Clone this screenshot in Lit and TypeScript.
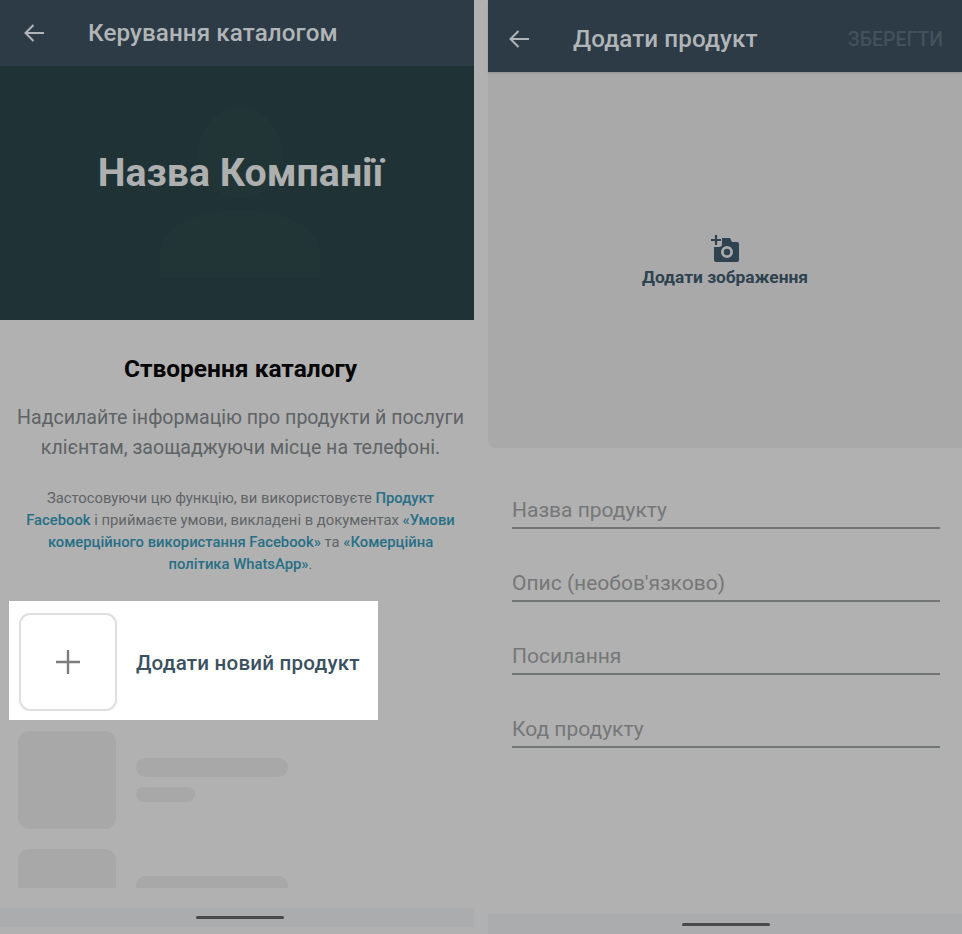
import { LitElement, html, css } from 'lit';
import { customElement } from 'lit/decorators.js';

const backArrow = html`<svg class="back" viewBox="0 0 20 18" width="20" height="18">
  <path d="M20 9H2M9.500 1L1.500 9l8 8" fill="none" stroke="currentColor" stroke-width="2"/>
</svg>`;

@customElement('app-root')
export class AppRoot extends LitElement {
  static styles = css`
    :host {
      display: grid;
      grid-template-columns: 474px 474px;
      column-gap: 14px;
      width: 962px;
      height: 934px;
      overflow: hidden;
      background: #b1b1b1;
      font-family: Roboto, "Noto Sans", sans-serif;
    }
    .panel {
      display: flex;
      flex-direction: column;
      height: 934px;
      min-width: 0;
    }
    .bar {
      display: flex;
      align-items: center;
      flex: none;
      background: #2c3b46;
      color: #b2b5b7;
    }
    .bar.left { height: 66px; padding-left: 24px; }
    .bar.right {
      height: 72px;
      padding: 6px 19px 0 21px;
      box-sizing: border-box;
      box-shadow: 0 1px 2px rgba(0,0,0,.15);
      position: relative;
    }
    .back { flex: none; margin-right: 44px; }
    .bar-title {
      font-size: 24.2px;
      font-weight: 500;
      letter-spacing: .1px;
      flex: 1;
      padding-bottom: 1px;
    }
    .save {
      font-size: 19.5px;
      font-weight: 500;
      color: #43515c;
    }
    .hero {
      position: relative;
      flex: none;
      height: 254px;
      background: #1f3336;
      display: flex;
      align-items: center;
      justify-content: center;
      overflow: hidden;
    }
    .hero svg { position: absolute; left: 160px; top: 40px; }
    .hero-name {
      position: relative;
      color: #aeb0b0;
      font-size: 39.300px;
      font-weight: 700;
      margin-left: 7px;
      padding-bottom: 40px;
    }
    .intro {
      flex: none;
      text-align: center;
      padding: 34px 0 0 7px;
    }
    .intro h2 {
      margin: 0;
      font-size: 24.500px;
      line-height: 30px;
      font-weight: 700;
      color: #050505;
    }
    .lead {
      margin: 19px 0 0;
      font-size: 19.570px;
      line-height: 30px;
      color: #5e6366;
    }
    .legal {
      margin: 24px 0 0;
      font-size: 14.800px;
      line-height: 22px;
      color: #5f6467;
    }
    .legal a { color: #276f86; text-decoration: none; font-weight: 500; }
    .add-row {
      flex: none;
      display: flex;
      align-items: center;
      gap: 19px;
      box-sizing: border-box;
      width: 369px;
      height: 119px;
      margin: 26px 0 0 9px;
      padding: 3px 0 0 10px;
      background: #fff;
    }
    .add-tile {
      flex: none;
      box-sizing: border-box;
      width: 98px;
      height: 98px;
      border: 2px solid #dfdfdf;
      border-radius: 11px;
      display: flex;
      align-items: center;
      justify-content: center;
    }
    .add-label {
      font-size: 20.600px;
      font-weight: 500;
      letter-spacing: .2px;
      color: #3b5160;
      padding-top: 1px;
    }
    .skeletons {
      flex: none;
      height: 157px;
      margin: 11px 0 0 18px;
      overflow: hidden;
      display: flex;
      flex-direction: column;
      gap: 20px;
    }
    .sk-row { flex: none; display: flex; align-items: center; gap: 20px; height: 98px; }
    .sk-tile { flex: none; width: 98px; height: 98px; border-radius: 11px; background: #a8a8a8; }
    .sk-lines { display: flex; flex-direction: column; gap: 10px; }
    .sk-long { width: 152px; height: 19px; border-radius: 10px; background: #a8a8a8; }
    .sk-short { width: 59px; height: 15px; border-radius: 8px; background: #a8a8a8; }
    .nav {
      flex: none;
      display: flex;
      align-items: center;
      justify-content: center;
      height: 19px;
      background: #aaacae;
    }
    .nav.left { margin-top: 20px; padding-left: 6px; }
    .nav.right { height: 20px; margin-top: auto; padding-left: 2px; }
    .handle { width: 88px; height: 3px; border-radius: 2px; background: #47494b; }
    .photo {
      flex: none;
      height: 376px;
      background: #a9a9a9;
      border-radius: 0 0 0 8px;
      display: flex;
      flex-direction: column;
      align-items: center;
      justify-content: center;
      color: #2e4250;
      padding-top: 2px;
      box-sizing: border-box;
    }
    .photo-label {
      font-size: 17.350px;
      font-weight: 700;
      margin-top: 5px;
    }
    .fields {
      display: flex;
      flex-direction: column;
      gap: 37px;
      padding: 45px 22px 0 24px;
    }
    .field {
      box-sizing: border-box;
      height: 36px;
      font-size: 21px;
      line-height: 26px;
      padding-top: 4px;
      color: #757778;
      border-bottom: 2px solid #737677;
    }
  `;

  render() {
    return html`
      <section class="panel">
        <header class="bar left">
          ${backArrow}
          <div class="bar-title">Керування каталогом</div>
        </header>
        <div class="hero">
          <svg width="160" height="180" viewBox="0 0 160 180">
            <ellipse cx="80" cy="47" rx="42" ry="46" fill="#213436"/>
            <path d="M0 171v-26c0-24 36-41 80-41s80 17 80 41v26z" fill="#213436"/>
          </svg>
          <div class="hero-name">Назва Компанії</div>
        </div>
        <div class="intro">
          <h2>Створення каталогу</h2>
          <p class="lead">Надсилайте інформацію про продукти й послуги<br />клієнтам, заощаджуючи місце на телефоні.</p>
          <p class="legal">
            Застосовуючи цю функцію, ви використовуєте <a>Продукт<br />Facebook</a> і приймаєте умови, викладені в документах <a>«Умови<br />комерційного використання Facebook»</a> та <a>«Комерційна<br />політика WhatsApp»</a>.
          </p>
        </div>
        <div class="add-row">
          <div class="add-tile">
            <svg width="24" height="24" viewBox="0 0 24 24">
              <path d="M12 0v24M0 12h24" stroke="#7d7d7d" stroke-width="2.4" fill="none"/>
            </svg>
          </div>
          <div class="add-label">Додати новий продукт</div>
        </div>
        <div class="skeletons">
          ${[0, 1].map(
            () => html`<div class="sk-row">
              <div class="sk-tile"></div>
              <div class="sk-lines"><div class="sk-long"></div><div class="sk-short"></div></div>
            </div>`,
          )}
        </div>
        <div class="nav left"><div class="handle"></div></div>
      </section>

      <section class="panel">
        <header class="bar right">
          ${backArrow}
          <div class="bar-title">Додати продукт</div>
          <div class="save">ЗБЕРЕГТИ</div>
        </header>
        <div class="photo">
          <svg width="28" height="27" viewBox="0 0 28 27">
            <path d="M5 0v10M0 5h10" stroke="currentColor" stroke-width="2.2" fill="none"/>
            <path fill-rule="evenodd" fill="currentColor" d="M11 3h8l2 4h5a2 2 0 0 1 2 2v16a2 2 0 0 1-2 2H5a2 2 0 0 1-2-2V12h5a3 3 0 0 0 3-3zM16 11a6 6 0 1 0 0 12a6 6 0 0 0 0-12zM16 13.800a3.200 3.200 0 1 1 0 6.400a3.200 3.200 0 0 1 0-6.400z"/>
          </svg>
          <div class="photo-label">Додати зображення</div>
        </div>
        <div class="fields">
          <div class="field">Назва продукту</div>
          <div class="field">Опис (необов'язково)</div>
          <div class="field">Посилання</div>
          <div class="field">Код продукту</div>
        </div>
        <div class="nav right"><div class="handle"></div></div>
      </section>
    `;
  }
}
